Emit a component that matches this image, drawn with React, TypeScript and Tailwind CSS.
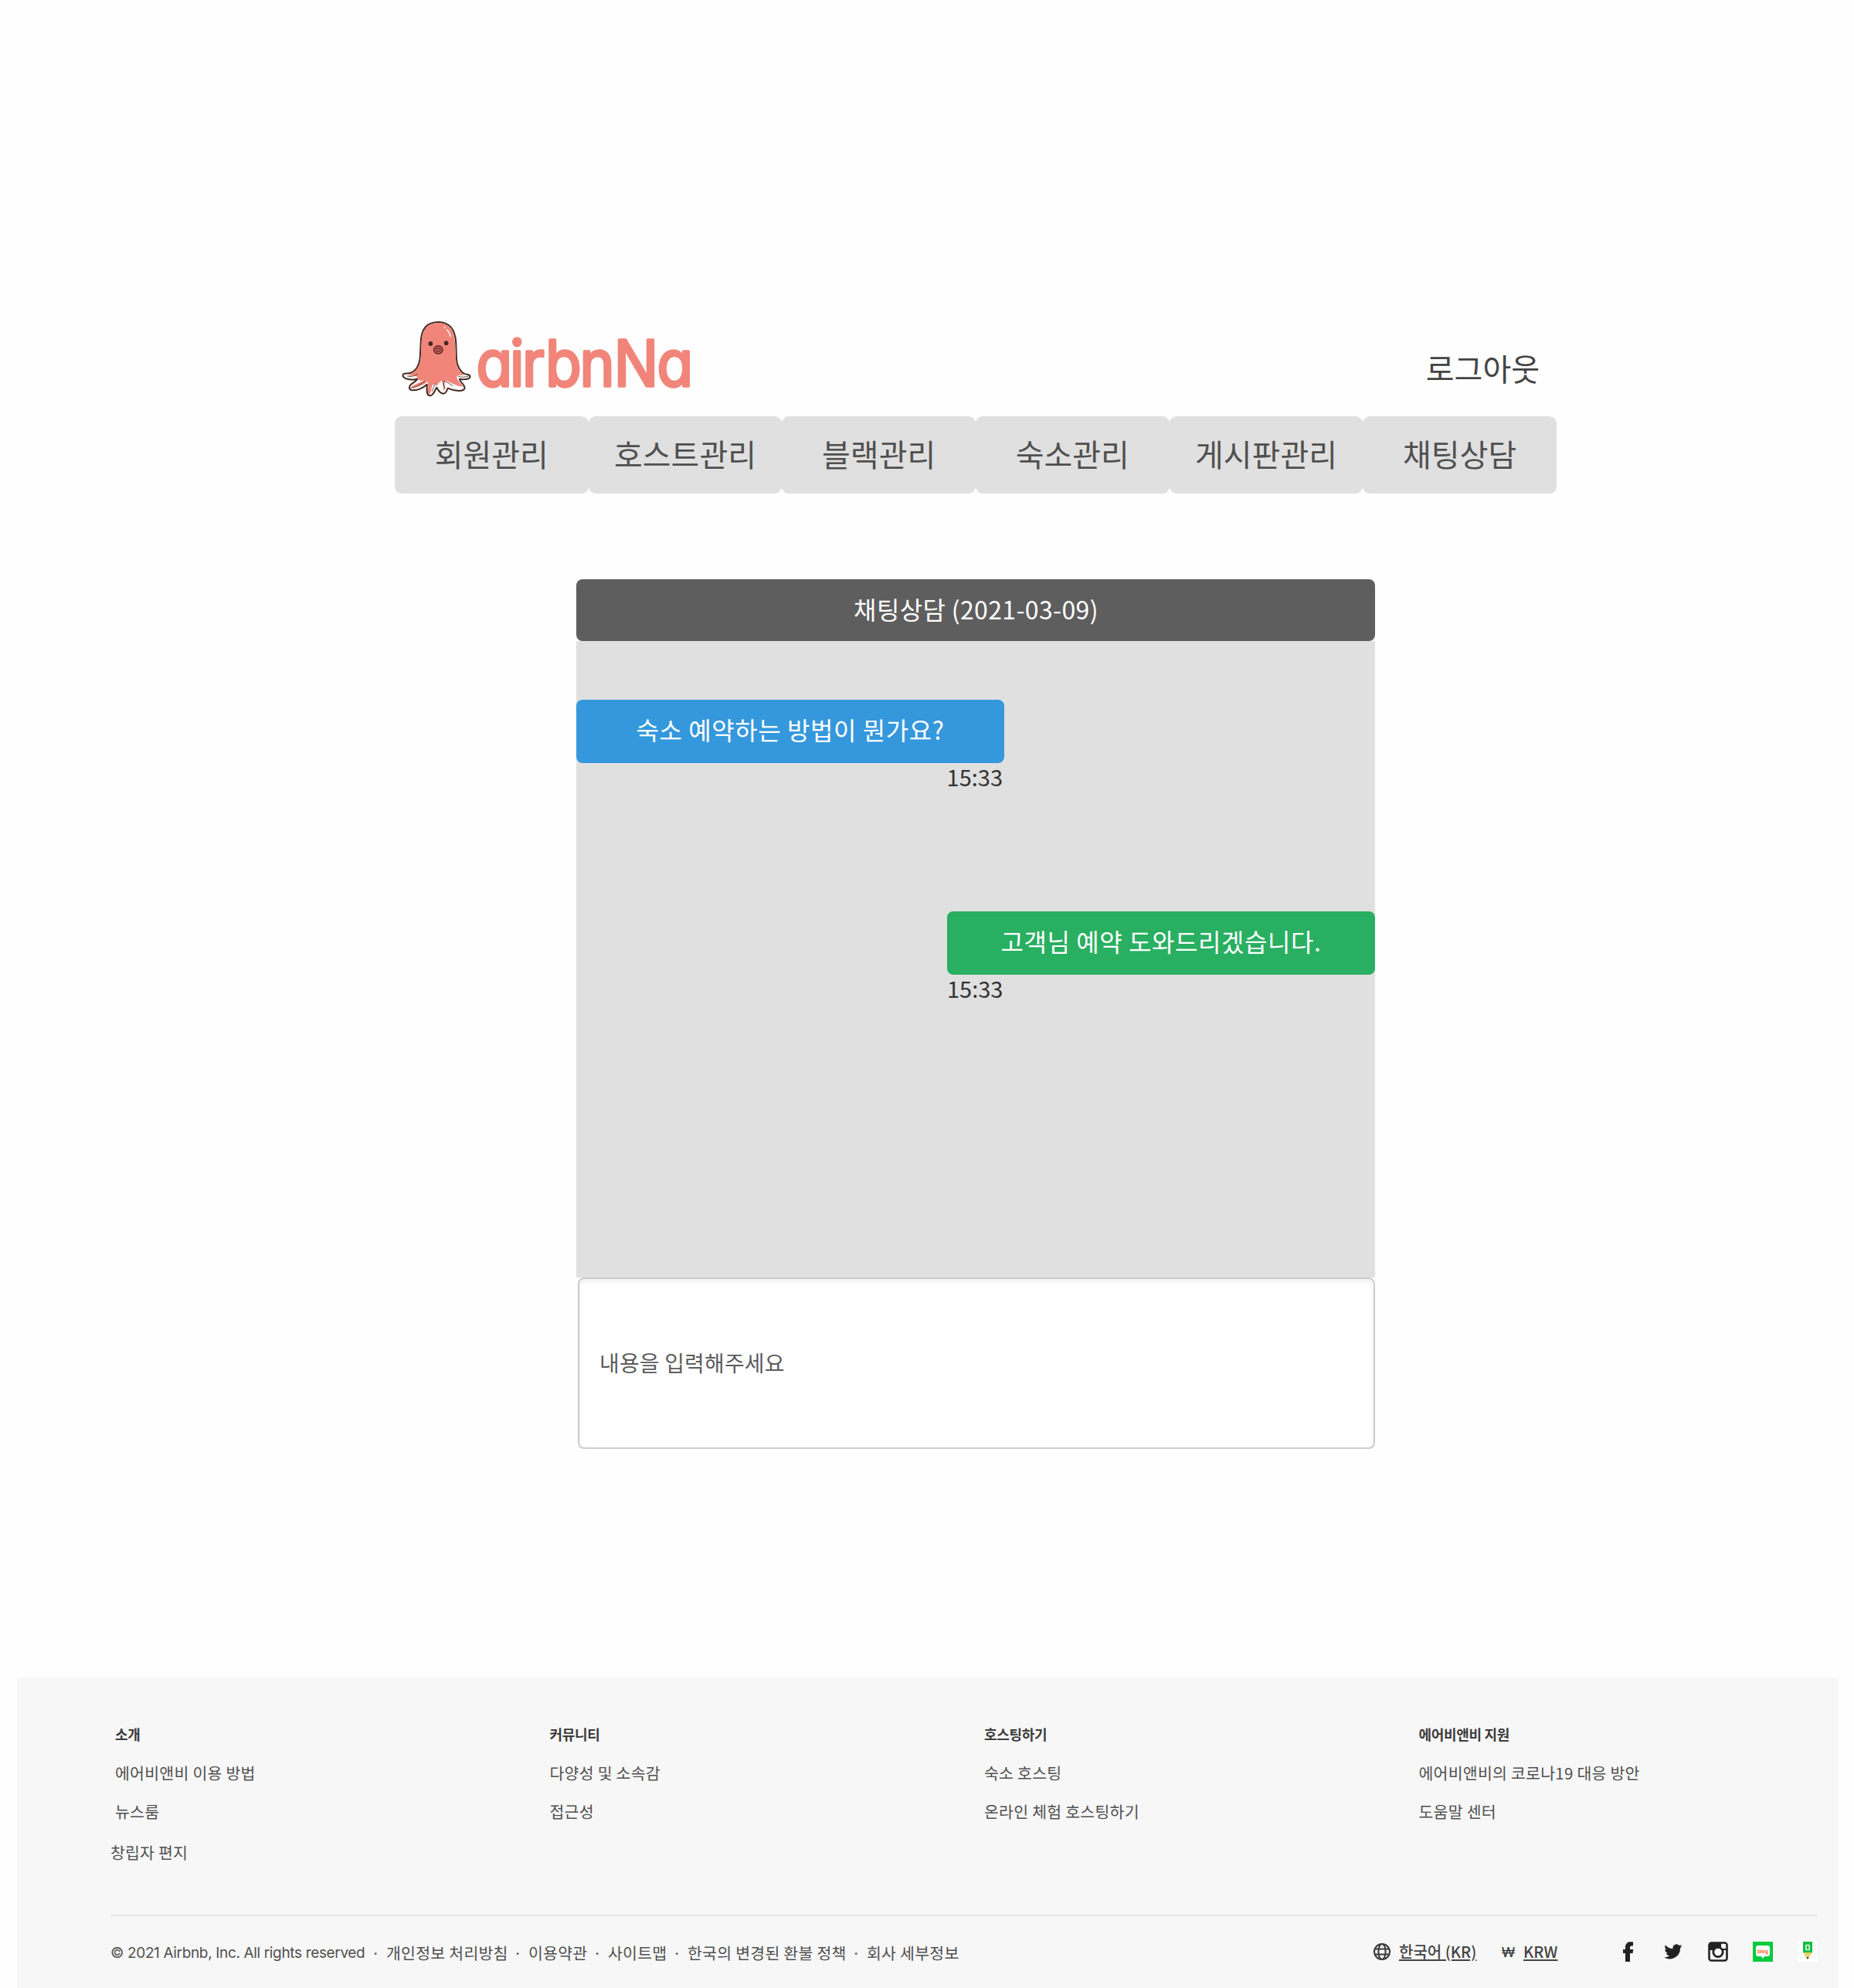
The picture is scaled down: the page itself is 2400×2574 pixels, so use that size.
import React from "react";

const navItems = ["회원관리", "호스트관리", "블랙관리", "숙소관리", "게시판관리", "채팅상담"];

const footerColumns = [
  { title: "소개", links: ["에어비앤비 이용 방법", "뉴스룸"] },
  { title: "커뮤니티", links: ["다양성 및 소속감", "접근성"] },
  { title: "호스팅하기", links: ["숙소 호스팅", "온라인 체험 호스팅하기"] },
  { title: "에어비앤비 지원", links: ["에어비앤비의 코로나19 대응 방안", "도움말 센터"] },
];

const legalLinks = [
  { label: "개인정보 처리방침", width: "w-[157px]" },
  { label: "이용약관", width: "w-[76px]" },
  { label: "사이트맵", width: "w-[76px]" },
  { label: "한국의 변경된 환불 정책", width: "w-[205px]" },
  { label: "회사 세부정보", width: "w-[121px]" },
];

function Octopus() {
  return (
    <svg viewBox="60 45 270 298" className="h-[99px] w-[90px] shrink-0" fill="none" strokeLinecap="round" strokeLinejoin="round">
      <path
        d="M134 130C135 78 157 51 203 51C246 52 268 82 271 130L273 195C275 225 289 246 305 253C315 256 326 254 326 263C326 273 307 277 285 273C283 283 305 293 305 308C303 323 268 322 239 309C235 319 232 330 222 330C209 329 201 316 196 306C188 315 185 338 169 338C153 336 159 309 158 294C146 305 127 317 101 317C88 315 87 306 93 297C100 287 117 283 121 272C103 280 67 273 64 260C63 248 79 254 94 249C116 242 129 218 131 190Z"
        fill="#fff"
        stroke="#452a22"
        strokeWidth="6"
      />
      <path
        d="M137 130C139 80 159 54 203 54C243 55 264 82 267 130L270 195C272 226 284 248 304 256C296 261 280 256 275 262C271 275 292 291 300 303C280 303 256 290 232 279C222 288 232 305 224 322C219 308 222 292 217 279C204 285 200 296 194 301C190 288 183 292 178 300C174 312 176 328 165 333C158 327 165 302 161 283C146 296 121 307 96 307C95 300 123 291 148 277C134 281 126 283 119 264C116 260 88 262 82 258C117 246 132 221 134 190Z"
        fill="#f1857a"
      />
      <path d="M82 262C93 266 108 262 121 254M96 307C118 307 136 290 149 282M281 263C292 267 307 266 319 262M190 291L178 320M219 282L228 310M225 281C240 285 248 295 258 299" stroke="#452a22" strokeWidth="2.5" />
      <ellipse cx="172" cy="135" rx="8.5" ry="9" fill="#452a22" />
      <ellipse cx="233" cy="133" rx="8.5" ry="9" fill="#452a22" />
      <ellipse cx="202" cy="159" rx="17.500" ry="15.500" fill="#dc5159" stroke="#452a22" strokeWidth="4" />
      <ellipse cx="202" cy="159" rx="8" ry="5.5" fill="#ec7c74" stroke="#452a22" strokeWidth="3.5" />
      <path d="M226 72L228 73M236 81C243 88 247 96 250 107" stroke="#fff" strokeWidth="4.5" />
    </svg>
  );
}

function Logo() {
  return (
    <div className="flex items-start">
      <Octopus />
      <svg viewBox="0 0 290 99" className="h-[99px] w-[290px] overflow-visible" fill="#f1857a" stroke="#f1857a" strokeWidth="3.6" strokeLinejoin="round">
        <text
          transform="translate(0 84.500) scale(0.92 1)"
          x="7 54.400 71.800 104.400 152.800 200.800 261.400"
          y="0"
          className="font-['Inter'] text-[83px] font-normal [font-feature-settings:'cv11'] [font-variation-settings:'opsz'_14]"
        >
          airbnNa
        </text>
      </svg>
    </div>
  );
}

function Globe() {
  return (
    <svg viewBox="0 0 24 24" className="h-6 w-6" fill="none" stroke="#3c3c3c" strokeWidth="2.1">
      <circle cx="12" cy="12" r="10" />
      <ellipse cx="12" cy="12" rx="4.6" ry="10" />
      <path d="M2.5 8.5h19M2.5 15.5h19" />
    </svg>
  );
}

function SocialIcons() {
  return (
    <div className="flex items-center gap-8">
      <svg viewBox="0 0 26 26" className="h-[26px] w-[26px]" fill="#222">
        <path d="M9 26V15H6v-5h3V7.500C9 3 11.500.3 15.500.3h3.500V5.500H17c-1.500 0-2 .8-2 2V10h4.200l-.6 5H15v11z" />
      </svg>
      <svg viewBox="0 0 24 24" className="h-[26px] w-[26px]" fill="#222">
        <path d="M22.500 5.100c-.8.400-1.600.6-2.500.7.900-.5 1.600-1.400 1.900-2.400-.8.500-1.800.9-2.800 1.100a4.400 4.400 0 0 0-7.500 4C8 8.300 4.800 6.600 2.600 3.900c-1.100 2-.6 4.500 1.400 5.900-.7 0-1.400-.2-2-.5 0 2.100 1.500 4 3.500 4.400-.6.200-1.300.2-2 .1.600 1.700 2.200 3 4.100 3A8.800 8.800 0 0 1 1.100 18.600a12.400 12.400 0 0 0 19.200-11c.9-.7 1.600-1.500 2.200-2.500z" />
      </svg>
      <svg viewBox="0 0 26 26" className="h-[26px] w-[26px]">
        <rect x="1.500" y="1.500" width="23" height="23" rx="3" fill="#f7f7f7" stroke="#222" strokeWidth="2.600" />
        <path d="M1 2h16v7h8v2h-6a7.500 7.500 0 0 0-12 0H1z" fill="#222" />
        <rect x="17.500" y="3" width="5.500" height="5.500" rx="1" fill="#f7f7f7" />
        <circle cx="13" cy="13.500" r="6.200" fill="#f7f7f7" stroke="#222" strokeWidth="2.800" />
      </svg>
      <svg viewBox="0 0 26 26" className="h-[26px] w-[26px]">
        <path fill="#06cb3e" d="M0 0h26v26H0z" />
        <path fill="#fff" d="M7 5h12q3 0 3 3v8q0 3-3 3h-4l-2 3-2-3H7q-3 0-3-3V8q0-3 3-3z" />
        <text x="13" y="14.800" textAnchor="middle" fill="#ff6a2a" className="font-['Inter'] text-[6.500px] font-bold">blog</text>
      </svg>
      <svg viewBox="0 0 26 26" className="h-[26px] w-[26px]">
        <path fill="#fff" d="M0 0h26v26H0z" />
        <path stroke="#dff3e0" d="M0 5h26M0 10h26M0 15h26M0 20h26" />
        <path fill="#16bd45" d="M7 0h12v14H7z" />
        <path fill="#e9d069" d="M7 14h12l-6 9z" />
        <path fill="#4b4634" d="M11.400 20h3.200L13 23z" />
        <path d="M11 4.500h4v6h-4z" fill="none" stroke="#d5f7da" strokeWidth="1.600" />
      </svg>
    </div>
  );
}

function Footer() {
  return (
    <footer className="mt-[296px] ml-[22px] h-[402px] w-[2357px] bg-[#f7f7f7] pt-[58px] pl-[121px] text-[#505050]">
      <div className="grid grid-cols-[repeat(4,562.500px)] pl-[6px]">
        {footerColumns.map((column) => (
          <div key={column.title}>
            <h3 className="h-[30px] text-[18px] leading-[30px] font-bold tracking-[-0.300px] text-[#3c3c3c]">{column.title}</h3>
            {column.links.map((link) => (
              <p key={link} className="mt-[18.500px] h-8 text-[20.500px] leading-8 tracking-[0.250px] whitespace-nowrap">
                {link}
              </p>
            ))}
          </div>
        ))}
      </div>
      <p className="mt-[21px] h-8 text-[20.500px] leading-8 tracking-[0.200px]">창립자 편지</p>
      <div className="mt-[65px] flex h-[98px] w-[2210px] justify-between border-t-2 border-[#e6e6e6]">
        <div className="flex h-[95px] items-center text-[20.500px] tracking-[0.250px] whitespace-nowrap">
          <span className="w-[330px] pt-[2px] font-['Inter'] text-[19px] tracking-[-0.350px]">© 2021 Airbnb, Inc. All rights reserved</span>
          {legalLinks.map((link) => (
            <React.Fragment key={link.label}>
              <span className="w-[27px] text-center">·</span>
              <span className={link.width}>{link.label}</span>
            </React.Fragment>
          ))}
        </div>
        <div className="flex h-[91px] items-center text-[20px] font-medium whitespace-nowrap text-[#444]">
          <Globe />
          <a className="ml-[10px] w-[101px] underline underline-offset-2">한국어 (KR)</a>
          <span className="ml-[32px] w-[18px] pt-[3px] font-['Liberation_Sans'] text-[18px] text-[#333]">₩</span>
          <a className="ml-[10px] w-[46px] underline underline-offset-2">KRW</a>
          <div className="ml-[77px]">
            <SocialIcons />
          </div>
        </div>
      </div>
    </footer>
  );
}

function ChatPanel() {
  return (
    <section className="mt-[111px] ml-[746px] w-[1034px]">
      <h1 className="flex h-20 items-center justify-center rounded-lg bg-[#5e5e5e] pb-[5px] pl-[1px] text-[32px] tracking-[0.350px] text-white">
        채팅상담 (2021-03-09)
      </h1>
      <div className="h-[824px] bg-[#e0e0e0] pt-[76px]">
        <div className="w-[554px]">
          <p className="flex h-[82px] items-center justify-center rounded-lg bg-[#3598dc] pb-[7px] text-[32px] tracking-[0.550px] text-white">
            숙소 예약하는 방법이 뭔가요?
          </p>
          <time className="block h-10 pr-[2px] text-right text-[29px] leading-[34px] text-[#333]">15:33</time>
        </div>
        <div className="mt-[152px] ml-auto w-[554px]">
          <p className="flex h-[82px] items-center justify-center rounded-lg bg-[#29af61] pb-[7px] text-[32px] tracking-[0.550px] text-white">
            고객님 예약 도와드리겠습니다.
          </p>
          <time className="block h-10 text-[29px] leading-[34px] text-[#333]">15:33</time>
        </div>
      </div>
      <div className="ml-[2px] flex h-[222px] items-center rounded-lg border-2 border-[#ccc] bg-white pb-[2px] pl-[26px] text-[28px] tracking-[0.150px] text-[#5c5c5c] shadow-[inset_0_3px_6px_rgba(0,0,0,0.075)]">
        내용을 입력해주세요
      </div>
    </section>
  );
}

export default function App() {
  return (
    <div className="h-[2574px] w-[2400px] overflow-hidden bg-[#fefefe] font-['Noto_Sans_CJK_KR',sans-serif]">
      <header className="ml-[511px] w-[1504px] pt-[415px]">
        <div className="flex h-[124px] justify-between pr-[22px] pl-[9px]">
          <Logo />
          <a className="mt-[31px] text-[40px] leading-[60px] text-[#444]">로그아웃</a>
        </div>
        <nav className="grid h-[100px] grid-cols-6">
          {navItems.map((item) => (
            <a key={item} className="flex items-center justify-center rounded-[9px] bg-[#e0e0e0] pb-[5px] text-[40px] text-[#505050]">
              {item}
            </a>
          ))}
        </nav>
      </header>
      <ChatPanel />
      <Footer />
    </div>
  );
}
